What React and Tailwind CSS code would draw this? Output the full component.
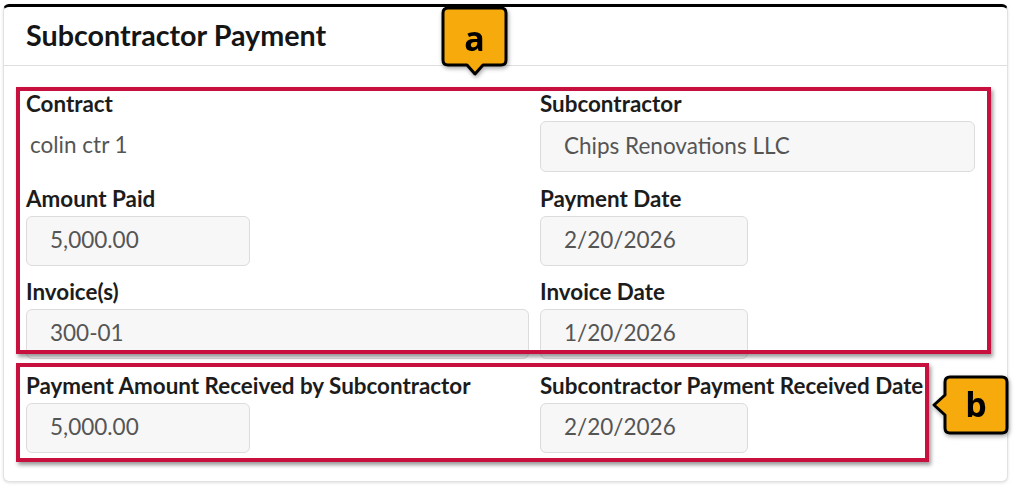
import React from "react";

const font = { fontFamily: "Lato, 'Open Sans', sans-serif" };

function Field({ label, value, width, className = "" }) {
    return (
        <div className={`flex flex-col ${className}`}>
            <div className="h-6 mb-[5px] text-[22.4px] leading-6 font-bold text-[#1c1c1c] whitespace-nowrap">{label}</div>
            <div
                className={`h-[50px] flex items-center pl-[23px] pb-[2px] bg-[#f7f7f7] border border-[#dcdcdc] rounded-md text-[22.5px] text-[#555] ${width}`}
            >
                {value}
            </div>
        </div>
    );
}

function CalloutA() {
    return (
        <div className="absolute left-[441px] top-[6px] w-[68px] h-[72px] drop-shadow-[1px_2px_2px_rgba(0,0,0,0.35)]">
            <svg width="68" height="72" viewBox="0 0 68 72" className="absolute inset-0">
                <path
                    d="M7,2 H60 Q65,2 65,7 V54 Q65,59 60,59 H42 L34,68 L26,59 H7 Q2,59 2,54 V7 Q2,2 7,2 Z"
                    fill="#f7aa0b"
                    stroke="#000"
                    strokeWidth="3"
                    strokeLinejoin="round"
                />
            </svg>
            <div
                className="absolute left-[2px] top-[2px] w-[63px] h-[57px] flex items-center justify-center text-[34px] font-bold text-black leading-none pt-[2px]"
                style={{ fontFamily: "'Open Sans', sans-serif" }}
            >
                a
            </div>
        </div>
    );
}

function CalloutB() {
    return (
        <div className="absolute left-[930px] top-[374px] w-[80px] h-[62px] drop-shadow-[1px_2px_2px_rgba(0,0,0,0.35)]">
            <svg width="80" height="62" viewBox="0 0 80 62" className="absolute inset-0">
                <path
                    d="M20,3 H72 Q77,3 77,8 V54 Q77,59 72,59 H20 Q15,59 15,54 V41 L4,31 L15,21 V8 Q15,3 20,3 Z"
                    fill="#f7aa0b"
                    stroke="#000"
                    strokeWidth="3"
                    strokeLinejoin="round"
                />
            </svg>
            <div
                className="absolute left-[15px] top-[3px] w-[62px] h-[56px] flex items-center justify-center text-[34px] font-bold text-black leading-none pb-[2px]"
                style={{ fontFamily: "'Open Sans', sans-serif" }}
            >
                b
            </div>
        </div>
    );
}

export default function App() {
    return (
        <div className="relative w-[1014px] h-[486px] bg-white overflow-hidden" style={font}>
            <div className="pl-[3px] pt-[4px] pr-[6px]">
                {/* Card */}
                <div className="h-[478px] bg-white border border-[#e2e2e2] border-t-[3px] border-t-black rounded-md shadow-[0_1px_3px_rgba(0,0,0,0.12)]">
                    <div className="h-[59px] flex items-center pl-[22px] border-b border-[#dedede]">
                        <h1 className="text-[28.7px] font-bold text-[#151515]">Subcontractor Payment</h1>
                    </div>

                    <div className="pt-[26px] pl-[22px] grid grid-cols-[503px_435px] gap-x-[11px] gap-y-[15px]">
                        {/* Row 1 */}
                        <div className="flex flex-col">
                            <div className="h-6 mb-[5px] text-[22.4px] leading-6 font-bold text-[#1c1c1c]">Contract</div>
                            <div className="h-[51px] flex items-center pl-[4px] pb-[3px] text-[22.5px] text-[#555]">colin ctr 1</div>
                        </div>
                        <Field label="Subcontractor" value="Chips Renovations LLC" width="w-[435px] h-[51px]" />

                        {/* Row 2 */}
                        <Field label="Amount Paid" value="5,000.00" width="w-[224px]" />
                        <Field label="Payment Date" value="2/20/2026" width="w-[208px]" />

                        {/* Row 3 */}
                        <Field label="Invoice(s)" value="300-01" width="w-[503px]" className="-mt-[1px]" />
                        <Field label="Invoice Date" value="1/20/2026" width="w-[208px]" className="-mt-[1px]" />

                        {/* Row 4 */}
                        <Field label="Payment Amount Received by Subcontractor" value="5,000.00" width="w-[224px]" />
                        <Field label="Subcontractor Payment Received Date" value="2/20/2026" width="w-[208px]" />
                    </div>
                </div>
            </div>

            {/* Annotation boxes */}
            <div className="absolute left-[16px] top-[87px] w-[975px] h-[267px] border-[4px] border-[#c8103f] shadow-[2px_3px_4px_rgba(0,0,0,0.4)]" />
            <div className="absolute left-[16px] top-[363px] w-[913px] h-[99px] border-[4px] border-[#c8103f] shadow-[2px_3px_4px_rgba(0,0,0,0.4)]" />

            <CalloutA />
            <CalloutB />
        </div>
    );
}
